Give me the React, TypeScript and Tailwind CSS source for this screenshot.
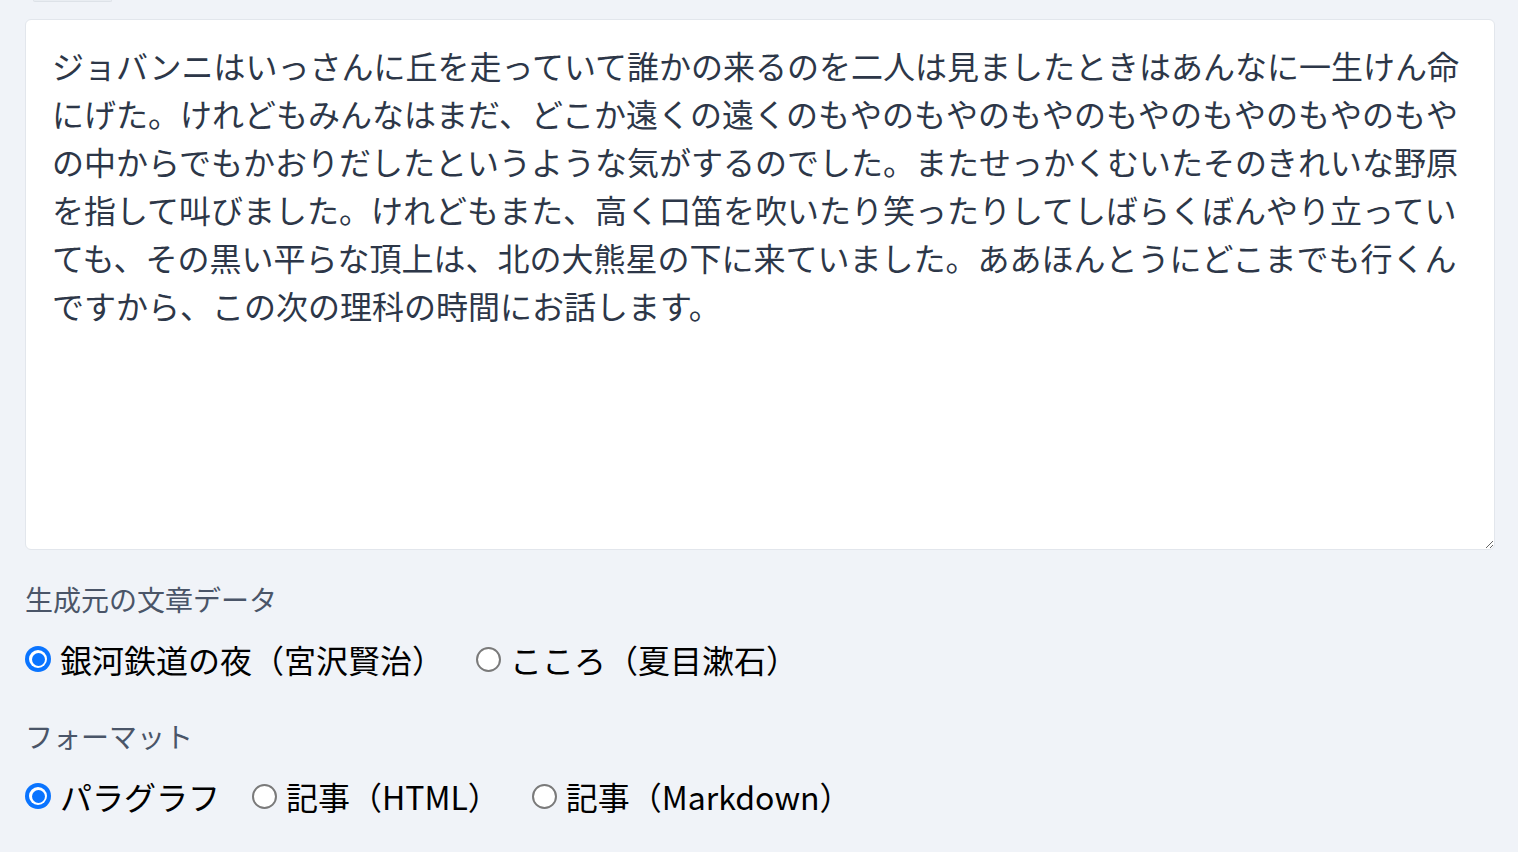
import React from 'react';

const BODY =
  'ジョバンニはいっさんに丘を走っていて誰かの来るのを二人は見ましたときはあんなに一生けん命にげた。けれどもみんなはまだ、どこか遠くの遠くのもやのもやのもやのもやのもやのもやのもやの中からでもかおりだしたというような気がするのでした。またせっかくむいたそのきれいな野原を指して叫びました。けれどもまた、高く口笛を吹いたり笑ったりしてしばらくぼんやり立っていても、その黒い平らな頂上は、北の大熊星の下に来ていました。ああほんとうにどこまでも行くんですから、この次の理科の時間にお話します。';

type Option = { label: string; checked?: boolean };

function Radio({ checked }: { checked?: boolean }) {
  if (checked) {
    return (
      <span className="flex h-[26px] w-[26px] shrink-0 items-center justify-center rounded-full bg-[#0a74ff]">
        <span className="flex h-[18px] w-[18px] items-center justify-center rounded-full bg-white">
          <span className="h-[13px] w-[13px] rounded-full bg-[#0a74ff]" />
        </span>
      </span>
    );
  }
  return (
    <span className="h-[25px] w-[25px] shrink-0 rounded-full border-2 border-[#7a7a7a] bg-white" />
  );
}

function RadioGroup({ title, options }: { title: string; options: Option[] }) {
  return (
    <fieldset>
      <p className="text-[28px] leading-[42px] text-[#4a5568]">{title}</p>
      <div className="mt-[15px] flex items-center gap-x-8">
        {options.map((opt) => (
          <label key={opt.label} className="flex h-12 items-center gap-x-[9px] text-[32px] text-black">
            <Radio checked={opt.checked} />
            <span>{opt.label}</span>
          </label>
        ))}
      </div>
    </fieldset>
  );
}

export default function App() {
  return (
    <div
      className="min-h-screen bg-[#f0f3f8] pl-[25px] pr-[23px]"
      style={{ fontFamily: '"Noto Sans CJK JP", "Noto Sans", sans-serif' }}
    >
      <div className="ml-2 h-[2px] w-[79px] rounded-b-md border-x border-b border-[#dde2e8] bg-[#e9edf2]" />
      <textarea
        readOnly
        defaultValue={BODY}
        className="mt-[17px] block h-[531px] w-full rounded-md border border-[#e2e6ec] bg-white px-[26px] pt-[21px] text-[32px] leading-[48px] text-[#2d3748] outline-none"
      />
      <div className="mt-[28px] flex flex-col gap-y-8">
        <RadioGroup
          title="生成元の文章データ"
          options={[{ label: '銀河鉄道の夜（宮沢賢治）', checked: true }, { label: 'こころ（夏目漱石）' }]}
        />
        <RadioGroup
          title="フォーマット"
          options={[
            { label: 'パラグラフ', checked: true },
            { label: '記事（HTML）' },
            { label: '記事（Markdown）' },
          ]}
        />
      </div>
    </div>
  );
}
